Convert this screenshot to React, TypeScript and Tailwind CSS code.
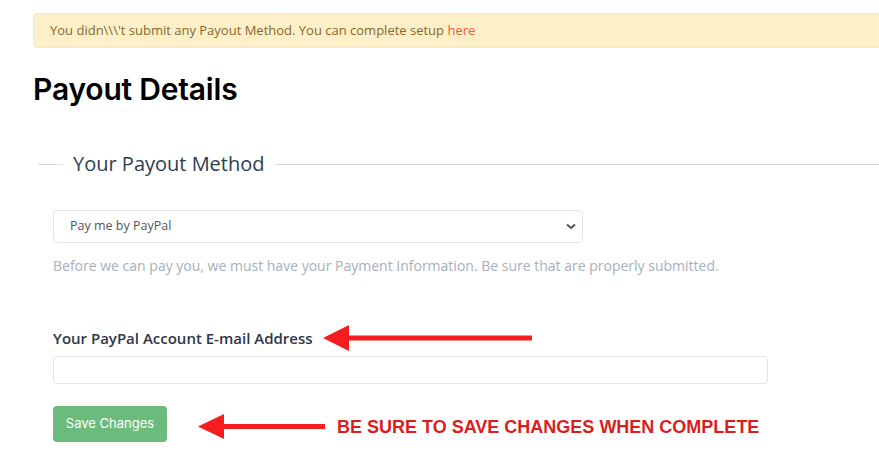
import React from "react";

function ArrowLeft({ width, height }: { width: number; height: number }) {
  const mid = height / 2;
  return (
    <svg width={width} height={height} viewBox={`0 0 ${width} ${height}`}>
      <polygon points={`0,${mid} 26,0 26,${height}`} fill="#f51d1d" />
      <rect x={22} y={mid - 2.5} width={width - 22} height={5} fill="#f51d1d" />
    </svg>
  );
}

export default function App() {
  return (
    <div
      className="w-[879px] h-[468px] overflow-hidden bg-white"
      style={{ fontFamily: '"Open Sans", sans-serif' }}
    >
      <div className="pl-[33px] w-[900px]">
        {/* Alert */}
        <div className="mt-[13px] h-[35px] w-[880px] flex items-center rounded-l-[4px] border border-[#fbe8b6] bg-[#fdf0c9] pl-[16px] text-[13px] text-[#86682f]">
          You didn\\\'t submit any Payout Method. You can complete setup&nbsp;
          <a className="text-[#ea5a4a]">here</a>
        </div>

        <h1
          className="mt-[23px] text-[30px] leading-[36px] font-semibold text-black tracking-[-0.2px]"
          style={{ fontFamily: "Inter, sans-serif" }}
        >
          Payout Details
        </h1>

        {/* Fieldset legend */}
        <div className="mt-[43px] flex items-center pl-[5px]">
          <div className="h-px w-[25px] bg-[#d8dce1]" />
          <span className="px-[10px] text-[20px] leading-[28px] text-[#2c3e50]">
            Your Payout Method
          </span>
          <div className="h-px flex-1 bg-[#d8dce1]" />
        </div>

        <div className="pl-[20px]">
          <div className="mt-[32px] flex h-[33px] w-[530px] items-center justify-between rounded-[4px] border border-[#e3e5e8] bg-white pl-[16px] pr-[6px] text-[12.5px] text-[#555]">
            <span>Pay me by PayPal</span>
            <svg width="10" height="7" viewBox="0 0 10 7">
              <path d="M1 1.5 L5 5 L9 1.5" stroke="#555" strokeWidth="2" fill="none" />
            </svg>
          </div>
          <p className="mt-[14px] text-[14px] leading-[18px] text-[#a7b0bb]">
            Before we can pay you, we must have your Payment Information. Be sure that are properly submitted.
          </p>

          <div className="mt-[50px] flex items-center">
            <label className="text-[15px] font-semibold leading-[20px] text-[#2d3748]">
              Your PayPal Account E-mail Address
            </label>
            <div className="ml-[10px]">
              <ArrowLeft width={209} height={26} />
            </div>
          </div>

          <div className="mt-[5px] h-[28px] w-[715px] rounded-[4px] border border-[#e3e5e8] bg-white" />

          <div className="mt-[22px] flex items-center">
            <button
              className="h-[36px] w-[114px] rounded-[4px] bg-[#6bbb7c] text-[13px] text-white"
              style={{ fontFamily: "Inter, sans-serif" }}
            >
              Save Changes
            </button>
            <div className="ml-[31px] mt-[4px]">
              <ArrowLeft width={127} height={25} />
            </div>
            <span
              className="ml-[12px] mt-[6px] text-[18px] font-bold text-[#d81e1e]"
              style={{ fontFamily: '"Liberation Sans", Arial, sans-serif' }}
            >
              BE SURE TO SAVE CHANGES WHEN COMPLETE
            </span>
          </div>
        </div>
      </div>
    </div>
  );
}
